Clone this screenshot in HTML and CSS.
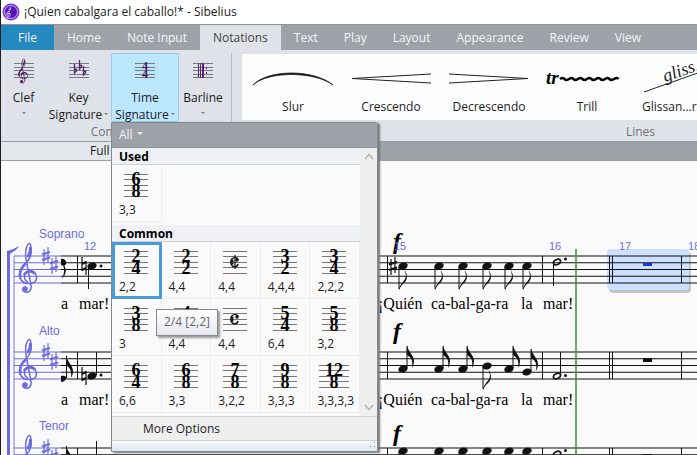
FILE: index.html
```html
<!DOCTYPE html>
<html lang="en">
<head>
<meta charset="utf-8">
<title>¡Quien cabalgara el caballo!* - Sibelius</title>
<link rel="stylesheet" href="styles.css">
</head>
<body>
<svg class="defs" aria-hidden="true">
  <defs>
    <g id="clef">
      <path class="line" stroke-width="1.500" d="M10 40C5 38 5 30 11.500 29C17 28.500 19.500 34 18 38C16 43 6 43 2.500 37C-.5 30 4 25 8 21C13 16 14.500 10 12.500 3C12 1 10.500 1 9 4C6.500 9 7.500 14 8.500 20L13 43C14 49 10 51 7 50C4 49 4.500 47 6 46"/>
      <path class="line" stroke-width="2.600" d="M2.500 36C.5 30 4 25 8 21M6 33C7.500 29.500 14 27.500 17 32M12.500 5C12.500 8 11.500 12 9.500 15"/>
      <circle class="ink" cx="7" cy="47" r="2.800"/>
    </g>
    <g id="sharp">
      <path class="line" stroke-width="1.200" d="M-2-7V9M2-9V7"/>
      <path class="line" stroke-width="2" d="M-4-1.500L4-4M-4 4L4 1.500"/>
    </g>
    <g id="natural">
      <path class="line" stroke-width="1.200" d="M-2-9V5M2-5V9"/>
      <path class="line" stroke-width="2" d="M-2-2L2-4M-2 4L2 2"/>
    </g>
    <ellipse id="head" class="ink" rx="4.800" ry="3.400" transform="rotate(-18)"/>
    <g id="down">
      <use href="#head"/>
      <path class="line" d="M-4 1V23"/>
      <path class="ink" d="M-4 23C-3 17 3 15 3 9L1.500 4C5 9 5 14 0 18C-2 20-3 21-3.500 24Z"/>
    </g>
    <g id="up">
      <use href="#head"/>
      <path class="line" d="M4-1V-23"/>
      <path class="ink" d="M4-24C5-17 11-14 11-8C11-5 10-3 9-1C10-8 9-11 4-14Z"/>
    </g>
    <ellipse id="half" class="line" stroke-width="1.700" rx="3.800" ry="2.500" transform="rotate(-24)"/>
    <path id="lines" class="line" d="M0 0H4000M0 6.750H4000M0 13.500H4000M0 20.250H4000M0 27H4000"/>
    <path id="purple-lines" class="line" d="M0 0H47M0 6.750H47M0 13.500H47M0 20.250H47M0 27H47"/>
    <path id="mini" fill="none" stroke="#777" d="M0 1.500H24M0 6.500H24M0 12.500H24M0 17.500H24M0 23.500H24"/>
    <path id="rib" fill="none" stroke="#777b80" d="M0 .5H20M0 4.500H20M0 7.500H20M0 11.500H20M0 14.500H20"/>
    <g id="c">
      <path class="line" stroke-width="1.500" d="M16 10C16 7 9 6 9 12C9 18 15 18 16 14"/>
      <path class="line" stroke-width="3" d="M10 9.500V14.500"/>
      <circle class="ink" cx="15" cy="10" r="1.700"/>
    </g>
    <g id="left-system">
      <g class="purple"><use href="#purple-lines" x="14"/><use href="#clef" x="18" y="-14"/><use href="#sharp" x="46"/><use href="#sharp" x="54" y="9"/></g>
    </g>
  </defs>
</svg>

<div class="window">
  <header class="title">
    <svg width="18" height="18" aria-hidden="true"><circle cx="9" cy="9" r="8.500" fill="#7b38d8"/><circle cx="9" cy="9" r="6.500" fill="#5416b8" stroke="#c8a6fa"/><g class="white" transform="translate(6 3) rotate(12) scale(.24)"><use href="#clef"/></g></svg>
    <span>¡Quien cabalgara el caballo!* - Sibelius</span>
  </header>

  <nav class="tabs">
    <button class="file">File</button>
    <button>Home</button>
    <button>Note Input</button>
    <button class="active">Notations</button>
    <button>Text</button>
    <button>Play</button>
    <button>Layout</button>
    <button>Appearance</button>
    <button>Review</button>
    <button>View</button>
  </nav>

  <div class="ribbon">
    <section class="group common">
      <div class="tools">
        <button class="tool clef">
          <svg width="22" height="26" aria-hidden="true"><use href="#rib" x="1" y="5"/><g class="plum" transform="translate(5 0) scale(.52 .5)"><use href="#clef"/></g></svg>
          <span>Clef</span><i class="caret"></i>
        </button>
        <button class="tool key">
          <svg width="22" height="26" aria-hidden="true"><use href="#rib" x="1" y="5"/><path class="flats" d="M6.500 6V15C10 12 9 10 6.500 12M11.500 2V11C15 8 14 6 11.500 8M15.500 8V17C19 14 18 12 15.500 14"/></svg>
          <span>Key</span><span class="last">Signature<i class="caret"></i></span>
        </button>
        <div class="drop">
          <button class="tool time" aria-expanded="true">
            <svg width="22" height="26" aria-hidden="true"><use href="#rib" x="1" y="5"/><text class="tiny" x="11" y="12">4</text><text class="tiny" x="11" y="20">4</text></svg>
            <span>Time</span><span class="last">Signature<i class="caret"></i></span>
          </button>
          <div class="popup">
            <button class="filter">All<i class="caret"></i></button>
            <div class="body">
              <div class="list">
                <h2>Used</h2>
                <div class="grid">
                  <button><svg width="30" height="25"><use href="#mini" x="3"/><text x="15" y="12">6</text><text x="15" y="24">8</text></svg><span>3,3</span></button>
                </div>
                <h2>Common</h2>
                <div class="grid">
                  <button class="chosen"><svg width="30" height="25"><use href="#mini" x="3"/><text x="15" y="12">2</text><text x="15" y="24">4</text></svg><span>2,2</span></button>
                  <button><svg width="30" height="25"><use href="#mini" x="3"/><text x="15" y="12">2</text><text x="15" y="24">2</text></svg><span>4,4</span></button>
                  <button><svg width="30" height="25"><use href="#mini" x="3"/><use href="#c" x="2"/><path class="line" stroke-width="1.300" d="M15 5V19"/></svg><span>4,4</span></button>
                  <button><svg width="30" height="25"><use href="#mini" x="3"/><text x="15" y="12">3</text><text x="15" y="24">2</text></svg><span>4,4,4</span></button>
                  <button><svg width="30" height="25"><use href="#mini" x="3"/><text x="15" y="12">3</text><text x="15" y="24">4</text></svg><span>2,2,2</span></button>
                  <button><svg width="30" height="25"><use href="#mini" x="3"/><text x="15" y="12">3</text><text x="15" y="24">8</text></svg><span>3</span></button>
                  <button><svg width="30" height="25"><use href="#mini" x="3"/><text x="15" y="12">4</text><text x="15" y="24">4</text></svg><span>4,4</span></button>
                  <button><svg width="30" height="25"><use href="#mini" x="3"/><use href="#c" x="2"/></svg><span>4,4</span></button>
                  <button><svg width="30" height="25"><use href="#mini" x="3"/><text x="15" y="12">5</text><text x="15" y="24">4</text></svg><span>6,4</span></button>
                  <button><svg width="30" height="25"><use href="#mini" x="3"/><text x="15" y="12">5</text><text x="15" y="24">8</text></svg><span>3,2</span></button>
                  <button><svg width="30" height="25"><use href="#mini" x="3"/><text x="15" y="12">6</text><text x="15" y="24">4</text></svg><span>6,6</span></button>
                  <button><svg width="30" height="25"><use href="#mini" x="3"/><text x="15" y="12">6</text><text x="15" y="24">8</text></svg><span>3,3</span></button>
                  <button><svg width="30" height="25"><use href="#mini" x="3"/><text x="15" y="12">7</text><text x="15" y="24">8</text></svg><span>3,2,2</span></button>
                  <button><svg width="30" height="25"><use href="#mini" x="3"/><text x="15" y="12">9</text><text x="15" y="24">8</text></svg><span>3,3,3</span></button>
                  <button><svg width="30" height="25"><use href="#mini" x="0"/><use href="#mini" x="6"/><text x="15" y="12">12</text><text x="15" y="24">8</text></svg><span>3,3,3,3</span></button>
                </div>
              </div>
              <div class="scroll">
                <svg width="10" height="7" aria-hidden="true"><path d="M1 6L5 1.500L9 6"/></svg>
                <svg width="10" height="7" aria-hidden="true"><path d="M1 1L5 5.500L9 1"/></svg>
              </div>
            </div>
            <button class="more">More Options</button>
            <div class="grip"><svg width="8" height="8" aria-hidden="true"><path fill="#8d9299" d="M5 1h1v1h-1zM5 5h1v1h-1zM1 5h1v1h-1z"/></svg></div>
            <div class="tip" role="tooltip">2/4 [2,2]</div>
          </div>
        </div>
        <button class="tool barline">
          <svg width="22" height="26" aria-hidden="true"><use href="#rib" x="1" y="5"/><path fill="#5a2470" d="M8 5h1v15h-1zM10 5h2v15h-2zM14 9h1v2h-1zM14 14h1v2h-1zM6 5h1v15h-1z"/></svg>
          <span>Barline</span><i class="caret"></i>
        </button>
      </div>
      <div class="caption">Common</div>
    </section>
    <section class="group lines">
      <div class="gallery">
        <button><svg width="82" height="34" aria-hidden="true"><path d="M1 21C16 5 62 5 81 21C62 7 16 7 1 21Z" fill="#000" stroke="#222" stroke-width=".8"/></svg><span>Slur</span></button>
        <button><svg width="82" height="34" aria-hidden="true"><path class="thin" d="M81 10L2 14.500L81 19"/></svg><span>Crescendo</span></button>
        <button><svg width="82" height="34" aria-hidden="true"><path class="thin" d="M1 10L80 14.500L1 19"/></svg><span>Decrescendo</span></button>
        <button><svg width="82" height="34" aria-hidden="true"><text class="trill" x="0" y="20">tr</text><path d="M14 15q3-2 4.500 0t4.500 0q3-2 4.500 0t4.500 0q3-2 4.500 0t4.500 0q3-2 4.500 0t4.500 0q3-2 4.500 0t4.500 0q3-2 4.500 0t4.500 0q3-2 4.500 0" fill="none" stroke="#000" stroke-width="2.500"/></svg><span>Trill</span></button>
        <button><svg width="82" height="34" aria-hidden="true"><text class="gliss" transform="translate(21 18) rotate(-19)">gliss.</text><path class="thin" d="M0 28L82-1"/></svg><span>Glissan...raight)</span></button>
      </div>
      <div class="caption">Lines</div>
    </section>
  </div>

  <div class="docs"><button>Full Score</button></div>

  <main class="score">
    <svg width="100%" height="100%" role="img" aria-label="Score">
      <g transform="translate(-1 -161)">
        <rect x="609" y="252" width="82" height="41" rx="4" fill="#c4c4c4"/>
        <rect x="607" y="249" width="82" height="41" rx="4" fill="#cce0ff"/>

        <g class="purple">
          <path class="ink" d="M7 251C12 250 15 248 19 246C17 250 14 251 10 254V460H7Z"/>
          <path class="line" opacity=".6" stroke-width="1.500" d="M14 256V460"/>
        </g>
        <use href="#left-system" y="256"/>
        <use href="#left-system" y="352"/>
        <use href="#left-system" y="448"/>

        <g class="black">
          <use href="#lines" x="61" y="256"/>
          <use href="#lines" x="61" y="352"/>
          <use href="#lines" x="61" y="448"/>
          <path class="line" d="M77.500 256V283M77.500 352V379M77.500 448V475M387.500 256V283M387.500 352V379M387.500 448V475M542.500 256V283M542.500 352V379M542.500 448V475M609.500 256V283M612.500 256V283M609.500 352V379M612.500 352V379M609.500 448V475M612.500 448V475M681.500 256V283M681.500 352V379M681.500 448V475"/>

          <path class="ink" d="M61 259C64 258 67 261 66 264C65 266 63 266 61 265ZM64 265C67 270 66 274 62 279C64 274 65 270 63 265Z"/>
          <use href="#natural" x="84" y="266"/>
          <use href="#head" x="92" y="266"/>
          <path class="line" d="M88.500 267V289"/>
          <circle class="ink" cx="101" cy="266" r="1.500"/>

          <path class="ink" d="M61 376C64 375 67 376 66 379C65 381 63 382 61 382Z"/>
          <path class="line" d="M66.500 378V356"/>
          <path class="ink" d="M66 355C67 362 73 365 73 371C73 374 72 376 71 378C72 371 70 368 66 365Z"/>
          <use href="#natural" x="84" y="376"/>
          <use href="#head" x="92" y="376"/>
          <path class="line" d="M96.500 375V352M66.500 474V446M96.500 468V441"/>
          <circle class="ink" cx="101" cy="375" r="1.500"/>
          <path class="ink" d="M66 445C67 452 73 455 73 461L71 464C72 458 70 456 66 453Z"/>

          <use href="#sharp" x="393" y="266"/>
          <use href="#down" x="403" y="266"/><use href="#down" x="439" y="266"/><use href="#down" x="463" y="266"/><use href="#down" x="487" y="266"/><use href="#down" x="509" y="266"/><use href="#down" x="527" y="266"/>
          <use href="#half" x="557" y="262"/><path class="line" d="M553.500 263V286"/><circle class="ink" cx="565.500" cy="259" r="1.500"/>

          <use href="#up" x="403" y="369"/><use href="#up" x="439" y="369"/><use href="#up" x="463" y="369"/><use href="#down" x="487" y="366"/><use href="#up" x="509" y="369"/><use href="#up" x="527" y="372"/>
          <use href="#half" x="557" y="376"/><path class="line" d="M560.500 375V352"/><circle class="ink" cx="565.500" cy="375.500" r="1.500"/>
          <rect class="ink" x="643" y="358" width="9" height="4"/>

          <use href="#down" x="403" y="451"/><use href="#down" x="439" y="451"/><use href="#down" x="463" y="451"/><use href="#down" x="487" y="451"/><use href="#down" x="509" y="451"/><use href="#down" x="527" y="451"/>
          <use href="#half" x="557" y="454"/><circle class="ink" cx="565.500" cy="450.500" r="1.500"/>
          <rect class="ink" x="643" y="454" width="9" height="4"/>
        </g>
        <rect x="643" y="263" width="9" height="3" fill="#2233ee"/>
        <path d="M576 249V460" stroke="#3f8d43" stroke-width="1.500"/>

        <g class="dynamics"><text x="393" y="249">f</text><text x="393" y="339">f</text><text x="393" y="441">f</text></g>
        <g class="bars">
          <text x="84" y="250">12</text><text x="394" y="250">15</text><text x="549" y="250">16</text><text x="619" y="250">17</text><text x="688" y="250">18</text>
        </g>
        <g class="names"><text x="39" y="238">Soprano</text><text x="39" y="335">Alto</text><text x="39" y="430">Tenor</text></g>
        <g class="lyrics">
          <text x="61" y="309">a</text><text x="79" y="309">mar!</text><text x="378" y="309">¡Quién</text><text x="431" y="309">ca-bal-ga-ra</text><text x="521" y="309">la</text><text x="543" y="309">mar!</text>
          <text x="61" y="405">a</text><text x="79" y="405">mar!</text><text x="378" y="405">¡Quién</text><text x="431" y="405">ca-bal-ga-ra</text><text x="521" y="405">la</text><text x="543" y="405">mar!</text>
        </g>
      </g>
    </svg>
  </main>
</div>
</body>
</html>
```
FILE: styles.css
```css
* { box-sizing: border-box; }

body {
  margin: 0;
  overflow: hidden;
  font: 12px/16px "Open Sans", "Noto Sans", sans-serif;
  color: #1c1c1c;
}

button {
  margin: 0;
  padding: 0;
  border: 0;
  background: none;
  font: inherit;
  color: inherit;
  white-space: nowrap;
}

svg { display: block; flex: none; overflow: visible; }
.defs { position: absolute; width: 0; height: 0; overflow: hidden; }

.line { fill: none; stroke: currentColor; }
.ink { fill: currentColor; }
.purple { color: #6c6ce0; }
.black { color: #111; }
.white { color: #fff; }
.plum { color: #4a1a60; }

.window {
  display: flex;
  flex-direction: column;
  height: 100vh;
  border-left: 1px solid #1f1f22;
  background: #dfe2e8;
}

.title {
  display: flex;
  align-items: center;
  gap: 4px;
  height: 24px;
  padding: 0 1px;
  background: #fff;
}

.tabs {
  display: flex;
  height: 26px;
  border-top: 1px solid #8f9399;
  background: #9da1a8;
  color: #f4f5f7;
}
.tabs button { padding: 0 13px; }
.tabs .file { width: 53px; background: #2389bf; }
.tabs .active { background: #dfe2e8; color: #444; }

.ribbon { display: flex; height: 91px; padding-top: 3px; }
.group { display: flex; flex-direction: column; }
.common { width: 231px; }
.tools { display: flex; height: 69px; border-right: 1px solid #b9bdc3; }
.caption { padding-top: 2px; text-align: center; color: #6f7278; }

.tool {
  display: flex;
  flex-direction: column;
  align-items: center;
  justify-content: flex-start;
  height: 69px;
  padding-top: 4px;
  border: 1px solid transparent;
}
.tool span { flex: none; line-height: 17px; }
.tool svg + span { margin-top: 5px; }
.clef { width: 45px; }
.key { width: 65px; }
.time { width: 68px; border-color: #93cdec; border-radius: 2px; background: #bde6ff; }
.barline { width: 48px; }
.drop { position: relative; }

.caret {
  display: inline-block;
  border: 3px solid transparent;
  border-top-color: #777b80;
  border-bottom: 0;
}
.tool .caret { border-width: 2px; border-bottom: 0; }
.tool > .caret { margin-top: 6px; }
.last .caret { margin: 0 0 4px 2px; }

.flats { fill: none; stroke: #5a2470; stroke-width: 1.3; }
.tiny { font: bold 12px "Liberation Serif", serif; text-anchor: middle; fill: #4a1a60; }

.lines { flex: 1; min-width: 0; padding-left: 10px; }
.gallery {
  display: flex;
  height: 66px;
  margin: 1px 0 2px;
  padding-left: 2px;
  overflow: hidden;
  background: #fcfefe;
}
.gallery button {
  display: flex;
  flex: none;
  flex-direction: column;
  align-items: center;
  justify-content: flex-start;
  width: 98px;
  padding-top: 10px;
}
.gallery span { line-height: 17px; }
.lines .caption { padding-left: 342px; }
.thin { fill: none; stroke: #222; }
.trill { font: italic bold 19px "Liberation Serif", serif; }
.gliss { font: italic 18px "Liberation Serif", serif; fill: #222; }

.docs {
  display: flex;
  height: 20px;
  border-top: 1px solid #9a9ea5;
  border-bottom: 1px solid #9a9ea5;
  background: #9da1a8;
}
.docs button { width: 232px; background: #e3e6eb; }

.score { flex: 1; min-height: 0; background: #fafafa; }
.score svg { overflow: hidden; }
.bars, .names { fill: #6c6ce0; }
.bars { font: 11px "Liberation Sans", sans-serif; }
.names { font: 12px "Liberation Sans", sans-serif; }
.lyrics { font: 16px "Liberation Serif", serif; }
.dynamics { font: italic bold 24px "Liberation Serif", serif; }

.popup {
  position: absolute;
  z-index: 2;
  top: 100%;
  left: 0;
  width: 267px;
  border: 1px solid #85898f;
  border-top-right-radius: 3px;
  background: #fafafa;
  box-shadow: 2px 1px 2px #777;
}
.filter {
  width: 100%;
  height: 25px;
  padding-left: 7px;
  border-bottom: 1px solid #8c9096;
  background: #9da1a8;
  color: #f4f5f7;
  text-align: left;
}
.filter .caret { margin: 0 0 4px 4px; border-top-color: #f4f5f7; }

.body { display: flex; }
.list { flex: 1; padding-bottom: 3px; }
.list h2 {
  height: 17px;
  margin: 0;
  padding-left: 7px;
  border-bottom: 1px solid #cdd0d5;
  background: #eff1f5;
  font: bold 12px/17px "Open Sans", "Noto Sans", sans-serif;
  color: #000;
}
.grid { display: grid; grid-template-columns: repeat(5, 1fr); }
.grid + h2 { margin-top: 3px; }
.grid button {
  display: flex;
  flex-direction: column;
  justify-content: flex-start;
  gap: 4px;
  height: 57px;
  padding: 8px 0 0 7px;
  border-right: 1px solid #eceef1;
  border-bottom: 1px solid #eceef1;
  text-align: left;
}
.grid svg { margin-left: 2px; }
.grid text { font: bold 18px "Liberation Serif", serif; text-anchor: middle; }
.grid .chosen { padding: 5px 0 0 4px; border: 3px solid #4a9bd6; }

.scroll {
  display: flex;
  flex-direction: column;
  justify-content: space-between;
  width: 17px;
  padding: 5px 4px;
  background: #efefef;
}
.scroll path { fill: none; stroke: #b4b4b4; stroke-width: 1.5; }

.more {
  width: 100%;
  height: 25px;
  padding-left: 31px;
  border-top: 1px solid #cfcfcf;
  border-bottom: 1px solid #cfcfcf;
  background: #efefef;
  text-align: left;
}
.grip {
  display: flex;
  justify-content: flex-end;
  height: 10px;
  background: linear-gradient(#fafcff, #dde5ee);
}

.tip {
  position: absolute;
  top: 186px;
  left: 44px;
  padding: 4px 7px 5px;
  border: 1px solid #8a8a8a;
  background: linear-gradient(#fff, #e6e6f2);
  box-shadow: 2px 2px 2px #999;
  color: #666;
}
```
